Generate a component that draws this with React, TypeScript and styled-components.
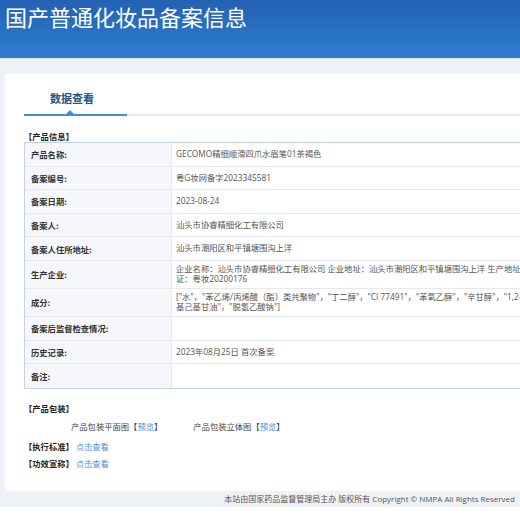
import React from "react";
import styled, { createGlobalStyle } from "styled-components";

const GlobalStyle = createGlobalStyle`
  html, body { margin: 0; padding: 0; background: #ffffff; }
  body {
    font-family: "Open Sans", "Noto Sans CJK SC", sans-serif;
    overflow: hidden;
    color: #444;
  }
  * { box-sizing: border-box; }
`;

const Page = styled.div`
  width: 520px;
  overflow: hidden;
  background: #eef2f6;
`;

const Header = styled.header`
  height: 59px;
  padding: 1px 0 0 5px;
  background: linear-gradient(180deg, #2461b3 0%, #2a74c6 65%, #2e7fd2 100%);
  border-bottom: 1px solid #dfe9f4;
`;

const Title = styled.h1`
  margin: 0;
  font-family: "Noto Sans CJK SC", sans-serif;
  font-size: 22px;
  font-weight: 400;
  line-height: 30px;
  color: #ffffff;
  white-space: nowrap;
`;

const Main = styled.main`
  padding: 15px 0 0 5px;
`;

const Panel = styled.section`
  width: 900px;
  height: 417px;
  padding: 16px 0 0 19px;
  background: #ffffff;
`;

const TabBar = styled.div`
  display: flex;
  border-bottom: 2px solid #e7eaee;
`;

const Tab = styled.div`
  position: relative;
  width: 103px;
  padding: 0 0 8px 26px;
  margin-bottom: -2px;
  border-bottom: 2px solid #3b8ee0;
  font-family: "Noto Sans CJK SC", sans-serif;
  font-size: 11px;
  font-weight: 700;
  line-height: 16px;
  color: #23548f;

  &::after {
    content: "";
    position: absolute;
    left: 42px;
    bottom: 0;
    border-left: 4px solid transparent;
    border-right: 4px solid transparent;
    border-bottom: 4px solid #3b8ee0;
  }
`;

const SectionTitle = styled.div<{ $top: number }>`
  margin-top: ${(p) => p.$top}px;
  font-family: "Noto Sans CJK SC", sans-serif;
  font-size: 8.3px;
  font-weight: 700;
  line-height: 12px;
  color: #222;
  white-space: nowrap;
  display: flex;
  align-items: center;
`;

const Link = styled.span`
  color: #4a8fdc;
  font-weight: 400;
`;

const Table = styled.div`
  width: 760px;
  border: 1px solid #c3d3e8;
  border-right: none;
`;

const Row = styled.div<{ $double?: boolean }>`
  display: grid;
  grid-template-columns: 147px 1fr;
  min-height: ${(p) => (p.$double ? 28 : 23.6)}px;
  border-bottom: 1px solid #e6e9ee;
  &:last-child { border-bottom: none; }
`;

const Label = styled.div`
  display: flex;
  align-items: center;
  padding: 0 6px;
  background: #f5f7fa;
  border-right: 1px solid #e6e9ee;
  font-family: "Noto Sans CJK SC", sans-serif;
  font-size: 8.3px;
  font-weight: 700;
  color: #333;
  white-space: nowrap;
`;

const Value = styled.div`
  display: flex;
  flex-direction: column;
  justify-content: center;
  padding: 3px 4px;
  font-size: 8.3px;
  line-height: 10.5px;
  color: #555;
  white-space: nowrap;
  overflow: hidden;
`;

const PackRow = styled.div`
  margin-top: 6px;
  padding-left: 47px;
  display: flex;
  gap: 31px;
  font-family: "Noto Sans CJK SC", sans-serif;
  font-size: 8.3px;
  line-height: 12px;
  color: #444;
  white-space: nowrap;
`;

const Footer = styled.footer`
  height: 16px;
  padding-right: 5px;
  text-align: right;
  font-size: 8px;
  line-height: 16px;
  color: #555;
  white-space: nowrap;
`;

type Item = { label: string; lines: string[] };

const rows: Item[] = [
  { label: "产品名称:", lines: ["GECOMO精细顺滑四爪水眉笔01茶褐色"] },
  { label: "备案编号:", lines: ["粤G妆网备字2023345581"] },
  { label: "备案日期:", lines: ["2023-08-24"] },
  { label: "备案人:", lines: ["汕头市协睿精细化工有限公司"] },
  { label: "备案人住所地址:", lines: ["汕头市潮阳区和平镇塘围沟上洋"] },
  {
    label: "生产企业:",
    lines: [
      "企业名称：汕头市协睿精细化工有限公司 企业地址：汕头市潮阳区和平镇塘围沟上洋 生产地址：汕头市潮阳区和平镇塘围沟上洋 生产许可",
      "证：粤妆20200176",
    ],
  },
  {
    label: "成分:",
    lines: [
      "[\"水\"，\"苯乙烯/丙烯酸（酯）类共聚物\"，\"丁二醇\"，\"CI 77491\"，\"苯氧乙醇\"，\"辛甘醇\"，\"1,2-己二醇\"，\"乙",
      "基己基甘油\"，\"脱氢乙酸钠\"]",
    ],
  },
  { label: "备案后监督检查情况:", lines: [""] },
  { label: "历史记录:", lines: ["2023年08月25日 首次备案"] },
  { label: "备注:", lines: [""] },
];

export default function App() {
  return (
    <>
      <GlobalStyle />
      <Page>
        <Header>
          <Title>国产普通化妆品备案信息</Title>
        </Header>
        <Main>
          <Panel>
            <TabBar>
              <Tab>数据查看</Tab>
            </TabBar>
            <SectionTitle $top={14}>【产品信息】</SectionTitle>
            <Table>
              {rows.map((r) => (
                <Row key={r.label} $double={r.lines.length > 1}>
                  <Label>{r.label}</Label>
                  <Value>
                    {r.lines.map((l, i) => (
                      <span key={i}>{l}</span>
                    ))}
                  </Value>
                </Row>
              ))}
            </Table>
            <SectionTitle $top={13}>【产品包装】</SectionTitle>
            <PackRow>
              <span>
                产品包装平面图【<Link>预览</Link>】
              </span>
              <span>
                产品包装立体图【<Link>预览</Link>】
              </span>
            </PackRow>
            <SectionTitle $top={8}>
              【执行标准】<Link>&nbsp;点击查看</Link>
            </SectionTitle>
            <SectionTitle $top={5}>
              【功效宣称】<Link>&nbsp;点击查看</Link>
            </SectionTitle>
          </Panel>
        </Main>
        <Footer>本站由国家药品监督管理局主办 版权所有 Copyright © NMPA All Rights Reserved</Footer>
      </Page>
    </>
  );
}
